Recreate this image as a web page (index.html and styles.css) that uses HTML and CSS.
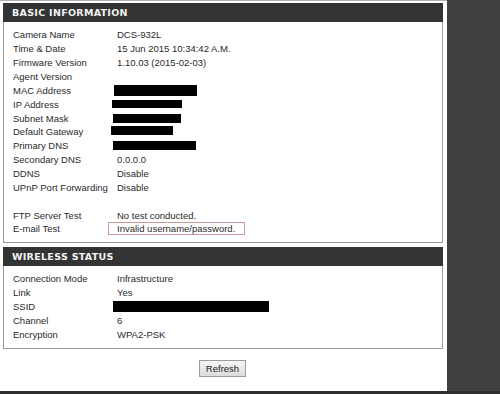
FILE: index.html
```html
<!DOCTYPE html>
<html lang="en">
<head>
    <meta charset="UTF-8">
    <title>DCS-932L Status</title>
    <link rel="stylesheet" href="styles.css">
</head>
<body>

    <div class="page">
        <div class="main">
            <div class="box">
                <div class="box-head">BASIC INFORMATION</div>
                <div class="rows basic">
                    <div class="row"><span class="label">Camera Name</span><span class="value">DCS-932L</span></div>
                    <div class="row"><span class="label">Time &amp; Date</span><span class="value">15 Jun 2015 10:34:42 A.M.</span></div>
                    <div class="row"><span class="label">Firmware Version</span><span class="value">1.10.03 (2015-02-03)</span></div>
                    <div class="row"><span class="label">Agent Version</span><span class="value"></span></div>
                    <div class="row"><span class="label">MAC Address</span><span class="value"><i class="hidden mac"></i></span></div>
                    <div class="row"><span class="label">IP Address</span><span class="value"><i class="hidden ip"></i></span></div>
                    <div class="row"><span class="label">Subnet Mask</span><span class="value"><i class="hidden mask"></i></span></div>
                    <div class="row"><span class="label">Default Gateway</span><span class="value"><i class="hidden gw"></i></span></div>
                    <div class="row"><span class="label">Primary DNS</span><span class="value"><i class="hidden dns"></i></span></div>
                    <div class="row"><span class="label">Secondary DNS</span><span class="value">0.0.0.0</span></div>
                    <div class="row"><span class="label">DDNS</span><span class="value">Disable</span></div>
                    <div class="row"><span class="label">UPnP Port Forwarding</span><span class="value">Disable</span></div>
                    <div class="row"></div>
                    <div class="row"><span class="label">FTP Server Test</span><span class="value">No test conducted.</span></div>
                    <div class="row"><span class="label">E-mail Test</span><span class="value"><span class="alert">Invalid username/password.</span></span></div>
                </div>
            </div>

            <div class="box">
                <div class="box-head">WIRELESS STATUS</div>
                <div class="rows wireless">
                    <div class="row"><span class="label">Connection Mode</span><span class="value">Infrastructure</span></div>
                    <div class="row"><span class="label">Link</span><span class="value">Yes</span></div>
                    <div class="row"><span class="label">SSID</span><span class="value"><i class="hidden ssid"></i></span></div>
                    <div class="row"><span class="label">Channel</span><span class="value">6</span></div>
                    <div class="row"><span class="label">Encryption</span><span class="value">WPA2-PSK</span></div>
                </div>
            </div>

            <div class="actions">
                <button class="btn">Refresh</button>
            </div>
        </div>
        <div class="side"></div>
    </div>
    <div class="footer"></div>

</body>
</html>
```

FILE: styles.css
```css
:root { --head: #333333; --side: #404042; --line: #9a9a9a; --text: #2a2a2a; --font: 'Liberation Sans', Arial, sans-serif; }
body { margin: 0; background: #fff; color: var(--text); font-family: var(--font); font-size: 9.5px; width: 500px; height: 394px; overflow: hidden; }

.page { display: flex; height: 391px; }
.main { width: 447px; box-sizing: border-box; border-top: 1px solid #b0b0b0; padding: 2px 4px 0 3px; }
.side { flex: 1; background: var(--side); }
.footer { height: 3px; background: #303030; }

/* CAJAS DE ESTADO */
.box { border: 1px solid var(--line); border-top: 0; margin-bottom: 4px; }
.box-head { background: var(--head); color: #f2f2f2; margin: 0 -1px; height: 19px; line-height: 19px; padding-left: 9px; font-family: 'DejaVu Sans', Verdana, sans-serif; font-weight: bold; font-size: 9.5px; letter-spacing: 0.3px; }

.rows.basic { padding: 6px 0 6px 9px; }
.rows.basic .row { height: 13.86px; }
.rows.wireless { padding: 6px 0 6px 9px; }
.rows.wireless .row { height: 14px; }
.row { display: flex; align-items: center; white-space: nowrap; }
.label { width: 104px; flex: none; }
.value { display: flex; align-items: center; }

.hidden { display: inline-block; background: #000; }
.hidden.mac { width: 83px; height: 11px; margin-left: -3px; }
.hidden.ip { width: 70px; height: 8px; margin-left: -5px; }
.hidden.mask { width: 68px; height: 9px; margin-left: -4px; }
.hidden.gw { width: 62px; height: 9px; margin-left: -6px; margin-top: -2px; }
.hidden.dns { width: 83px; height: 9px; margin-left: -4px; }
.hidden.ssid { width: 156px; height: 11px; margin-left: -4px; margin-top: -1px; }

.alert { border: 1px solid #c99a9a; padding: 0 9px 0 8px; margin-left: -9px; height: 11px; line-height: 11px; display: inline-block; }

.actions { display: flex; justify-content: center; padding-top: 7px; padding-right: 1px; }
.btn { font-family: var(--font); font-size: 9.5px; color: #222; background: linear-gradient(#f6f6f6, #dcdcdc); border: 1px solid #9c9c9c; width: 47px; height: 17px; padding: 0; }
```
